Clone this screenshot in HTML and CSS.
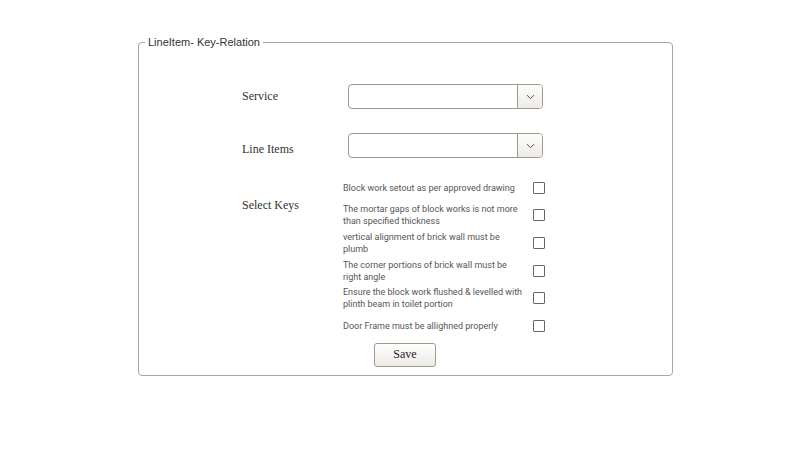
FILE: index.html
```html
<!DOCTYPE html>
<html>
<head>
<meta charset="utf-8">
<link rel="stylesheet" href="styles.css">
</head>
<body>
<div class="page">
  <fieldset class="panel">
    <legend class="panel-title">LineItem- Key-Relation</legend>
    <div class="form">
      <div class="row row-service">
        <div class="label">Service</div>
        <div class="select"><span class="select-field"></span><span class="select-btn"><svg width="9" height="6" viewBox="0 0 9 6"><path d="M1 1.2 L4.5 4.6 L8 1.2" fill="none" stroke="#555" stroke-width="1"/></svg></span></div>
      </div>
      <div class="row row-items">
        <div class="label label-low">Line Items</div>
        <div class="select"><span class="select-field"></span><span class="select-btn"><svg width="9" height="6" viewBox="0 0 9 6"><path d="M1 1.2 L4.5 4.6 L8 1.2" fill="none" stroke="#555" stroke-width="1"/></svg></span></div>
      </div>
      <div class="row row-keys">
        <div class="label label-keys">Select Keys</div>
        <div class="keys">
          <div class="key"><span class="key-text">Block work setout as per approved drawing</span><span class="check"></span></div>
          <div class="key"><span class="key-text">The mortar gaps of block works is not more than specified thickness</span><span class="check"></span></div>
          <div class="key"><span class="key-text">vertical alignment of brick wall must be plumb</span><span class="check"></span></div>
          <div class="key"><span class="key-text">The corner portions of brick wall must be right angle</span><span class="check"></span></div>
          <div class="key"><span class="key-text">Ensure the block work flushed &amp; levelled with plinth beam in toilet portion</span><span class="check"></span></div>
          <div class="key"><span class="key-text">Door Frame must be allighned properly</span><span class="check"></span></div>
        </div>
      </div>
      <div class="actions">
        <button class="save">Save</button>
      </div>
    </div>
  </fieldset>
</div>
</body>
</html>
```

FILE: styles.css
```css
html, body {
  margin: 0;
  padding: 0;
  background: #ffffff;
}

.page {
  padding-top: 35px;
  padding-left: 138px;
}

.panel {
  box-sizing: border-box;
  width: 535px;
  height: 341px;
  margin: 0;
  padding: 0;
  border: 1px solid #aaa797;
  border-radius: 4px;
  min-width: 0;
}

.panel-title {
  font-family: "Liberation Sans", Arial, sans-serif;
  font-size: 11px;
  color: #333;
  padding: 0 3px;
  margin-left: 6px;
  line-height: 14px;
}

.form {
  padding-left: 103px;
  padding-top: 35px;
}

.row {
  display: flex;
  align-items: center;
}

.row-items {
  margin-top: 24px;
}

.row-keys {
  align-items: flex-start;
  margin-top: 16px;
}

.label {
  width: 106px;
  font-family: "Liberation Serif", "Times New Roman", serif;
  font-size: 12px;
  color: #333;
}

.label-low {
  padding-top: 8px;
}

.label-keys {
  width: 101px;
  padding-top: 24px;
}

.select {
  box-sizing: border-box;
  display: flex;
  width: 195px;
  height: 25px;
  border: 1px solid #a09a86;
  border-radius: 4px;
  overflow: hidden;
  background: #fff;
}

.select-field {
  flex: 1;
}

.select-btn {
  width: 24px;
  border-left: 1px solid #a09a86;
  background: linear-gradient(#fdfdfc, #ecebe6);
  display: flex;
  align-items: center;
  justify-content: center;
}

.keys {
  display: flex;
  flex-direction: column;
  width: 203px;
}

.key {
  height: 27.6px;
  display: flex;
  align-items: center;
  justify-content: space-between;
}

.key-text {
  width: 181px;
  font-family: Roboto, "Noto Sans", sans-serif;
  font-size: 9px;
  line-height: 12px;
  color: #555;
}

.check {
  box-sizing: border-box;
  width: 12px;
  height: 12px;
  border: 1px solid #666;
  border-radius: 1px;
  background: #fff;
  margin-right: 1px;
}

.actions {
  padding-left: 132px;
  padding-top: 3px;
}

.save {
  box-sizing: border-box;
  width: 62px;
  height: 24px;
  border: 1px solid #a09a86;
  border-radius: 3px;
  background: linear-gradient(#ffffff, #eceae4);
  font-family: "Liberation Serif", "Times New Roman", serif;
  font-size: 12px;
  color: #222;
  padding: 0;
}
```
